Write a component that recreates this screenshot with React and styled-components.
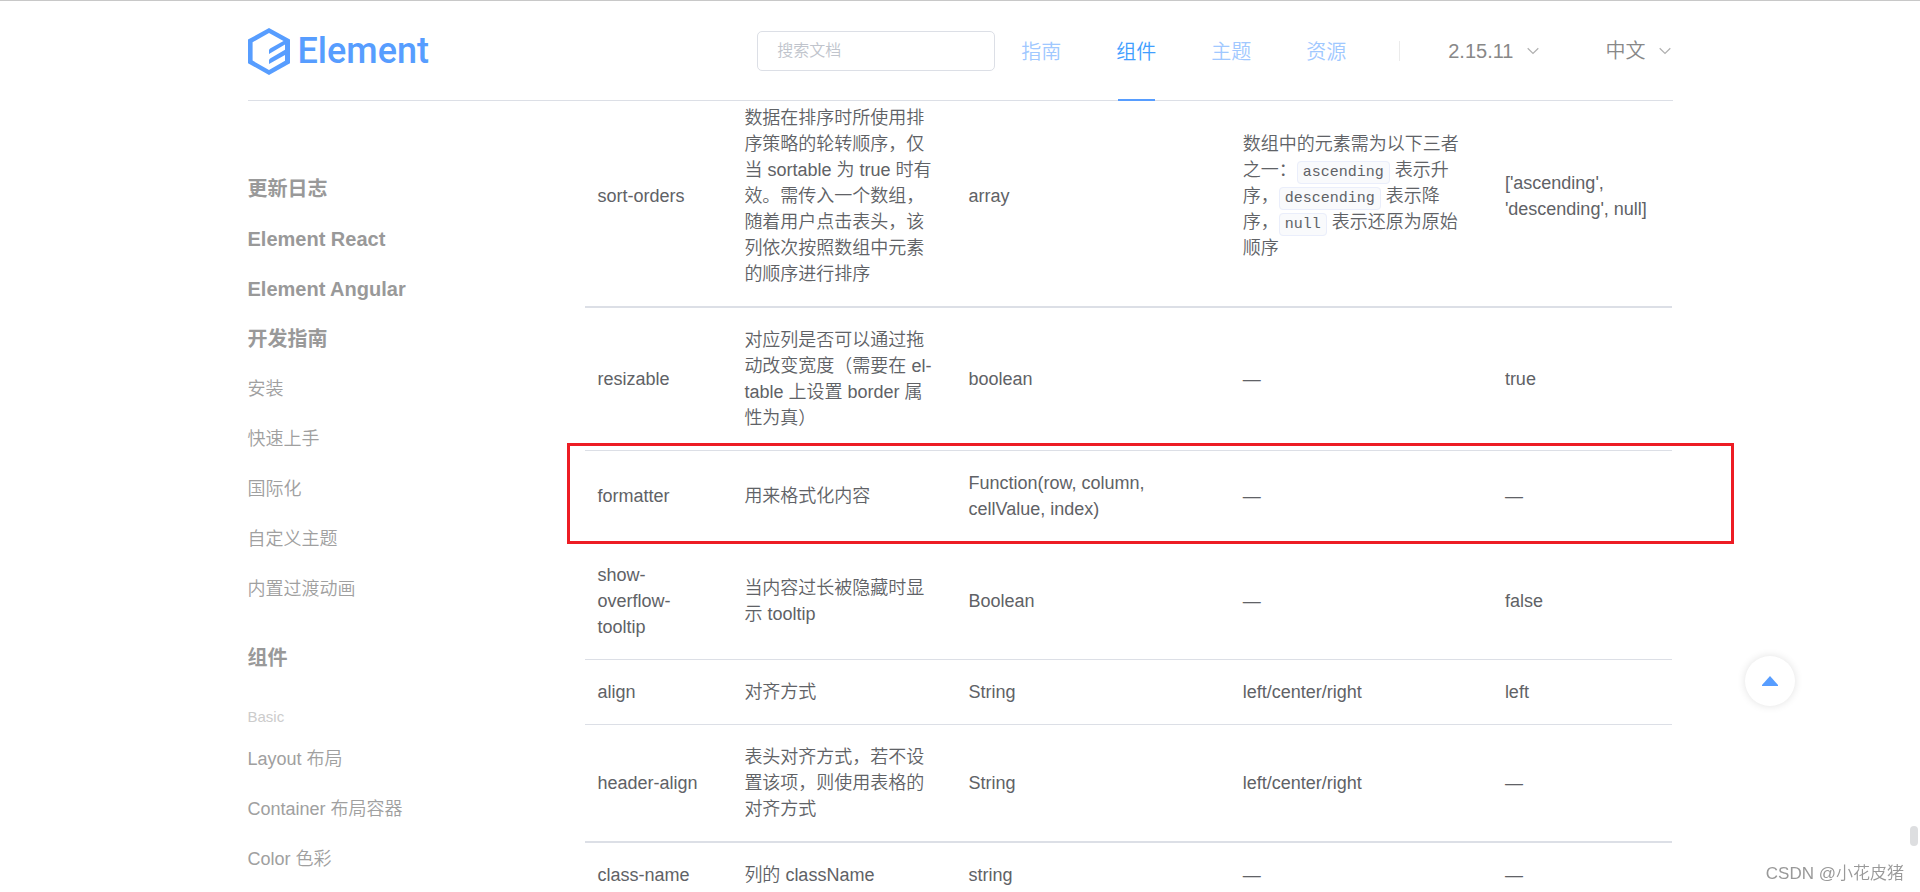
import React from 'react'
import styled, { createGlobalStyle } from 'styled-components';

const Code = styled.code`
    padding: 2px 5px;
    border: 1px solid #eaeefb;
    border-radius: 4px;
    background: #f9fafc;
    font-family: "Liberation Mono", monospace;
    font-size: 15px;
    line-height: 16px;
`

const links = [
    { text: "更新日志", bold: true },
    { text: "Element React", bold: true },
    { text: "Element Angular", bold: true },
    { text: "开发指南", bold: true },
    { text: "安装" },
    { text: "快速上手" },
    { text: "国际化" },
    { text: "自定义主题" },
    { text: "内置过渡动画" },
]

const basicLinks = ["Layout 布局", "Container 布局容器", "Color 色彩"]

const navLinks = ["指南", "组件", "主题", "资源"]

const rows = [
    {
        name: "sort-orders",
        desc: "数据在排序时所使用排序策略的轮转顺序，仅当 sortable 为 true 时有效。需传入一个数组，随着用户点击表头，该列依次按照数组中元素的顺序进行排序",
        type: "array",
        options: (
            <>
                数组中的元素需为以下三者之一：<Code>ascending</Code> 表示升序，<Code>descending</Code> 表示降序，<Code>null</Code> 表示还原为原始顺序
            </>
        ),
        value: "['ascending', 'descending', null]",
        thick: true,
    },
    {
        name: "resizable",
        desc: "对应列是否可以通过拖动改变宽度（需要在 el-table 上设置 border 属性为真）",
        type: "boolean",
        options: "—",
        value: "true",
    },
    {
        name: "formatter",
        desc: "用来格式化内容",
        type: "Function(row, column, cellValue, index)",
        options: "—",
        value: "—",
        thick: true,
        marked: true,
    },
    {
        name: "show-overflow-tooltip",
        desc: "当内容过长被隐藏时显示 tooltip",
        type: "Boolean",
        options: "—",
        value: "false",
    },
    {
        name: "align",
        desc: "对齐方式",
        type: "String",
        options: "left/center/right",
        value: "left",
    },
    {
        name: "header-align",
        desc: "表头对齐方式，若不设置该项，则使用表格的对齐方式",
        type: "String",
        options: "left/center/right",
        value: "—",
        thick: true,
    },
    {
        name: "class-name",
        desc: "列的 className",
        type: "string",
        options: "—",
        value: "—",
    },
]

const Chevron = () => (
    <svg width="12" height="8" viewBox="0 0 12 8" fill="none" stroke="#b0b0b0" strokeWidth="1.2" aria-hidden="true">
        <path d="M0.7 1.2 L6 6.4 L11.3 1.2" />
    </svg>
)

const App = () => (
    <Page>
        <GlobalStyle />
        <Header>
            <HeaderInner>
                <Logo href="#" aria-label="Element">
                    <svg width="42" height="47" viewBox="0 0 42 47" fill="#579dff" aria-hidden="true">
                        <path
                            fillRule="evenodd"
                            d="M21 0 L42 11.6 V35.2 L21 47 L0 35.2 V11.6 Z M21 5 L4.6 14.2 V32.6 L21 42 L37 32.8 V27 L21 36 V32.6 Q21 31 22.5 30.2 L37 21.8 V16.6 L21 26 V22.6 Q21 21 22.5 20.2 L35.5 12.9 Z"
                        />
                    </svg>
                    <LogoText>Element</LogoText>
                </Logo>
                <Search type="text" placeholder="搜索文档" aria-label="搜索文档" />
                <Nav>
                    {navLinks.map((text) => (
                        <NavLink key={text} href="#" $active={text === "组件"}>{text}</NavLink>
                    ))}
                </Nav>
                <Divider />
                <Picker>2.15.11<Chevron /></Picker>
                <Picker>中文<Chevron /></Picker>
            </HeaderInner>
        </Header>
        <Body>
            <Container>
                <Sidebar>
                    {links.map((link) => (
                        <SideLink key={link.text} href="#" $bold={link.bold}>{link.text}</SideLink>
                    ))}
                    <SideGroup>
                        <SideLink href="#" $bold>组件</SideLink>
                        <GroupTitle>Basic</GroupTitle>
                        {basicLinks.map((text) => (
                            <SideLink key={text} href="#">{text}</SideLink>
                        ))}
                    </SideGroup>
                </Sidebar>
                <Content>
                    <Table>
                        <colgroup>
                            <Col $width="13.5%" />
                            <Col $width="20.6%" />
                            <Col $width="25.2%" />
                            <Col $width="24.1%" />
                            <Col $width="16.6%" />
                        </colgroup>
                        <tbody>
                            {rows.map((row) => (
                                <Row key={row.name} $thick={row.thick} $marked={row.marked}>
                                    <td>{row.name}</td>
                                    <td>{row.desc}</td>
                                    <td>{row.type}</td>
                                    <td>{row.options}</td>
                                    <td>{row.value}</td>
                                </Row>
                            ))}
                        </tbody>
                    </Table>
                </Content>
            </Container>
        </Body>
        <BackTop aria-label="回到顶部">
            <svg width="16" height="10" viewBox="0 0 16 10" fill="#579dff" aria-hidden="true">
                <path d="M8 0 L16 9 V10 H0 V9 Z" />
            </svg>
        </BackTop>
        <ScrollThumb />
        <Watermark>CSDN @小花皮猪</Watermark>
    </Page>
)

const GlobalStyle = createGlobalStyle`
    * {
        box-sizing: border-box;
    }
    body {
        margin: 0;
        background: #fff;
        color: #606266;
        font-family: "Liberation Sans", "Noto Sans CJK SC", sans-serif;
        font-size: 18px;
        font-weight: 350;
        line-height: 26px;
    }
    a {
        text-decoration: none;
    }
`

const Page = styled.div`
    display: flex;
    flex-direction: column;
    height: 100vh;
    overflow: hidden;
`

const Header = styled.header`
    flex: none;
    padding: 0 24px;
    border-top: 1px solid #c8c8c8;
`

const HeaderInner = styled.div`
    display: flex;
    align-items: center;
    height: 100px;
    max-width: 1425px;
    margin: 0 auto;
    padding: 1px 2px 0 0;
    border-bottom: 1px solid #dcdfe6;
`

const Logo = styled.a`
    display: flex;
    align-items: center;
    gap: 8px;
    margin-right: auto;
`

const LogoText = styled.span`
    color: #579dff;
    font-family: Roboto, sans-serif;
    font-size: 36px;
    font-weight: 500;
    line-height: 48px;
`

const Search = styled.input`
    width: 238px;
    height: 40px;
    padding: 0 19px;
    border: 1px solid #dcdfe6;
    border-radius: 5px;
    background: #fff;
    color: #606266;
    font: inherit;
    font-size: 16px;
    &::placeholder {
        color: #c0c4cc;
        opacity: 1;
    }
`

const Nav = styled.nav`
    display: flex;
    align-self: stretch;
    gap: 55px;
    margin-left: 26px;
`

const NavLink = styled.a`
    display: flex;
    align-items: center;
    height: 99px;
    color: ${props => props.$active ? "#409eff" : "#a0c8ff"};
    font-size: 20px;
    background: ${props => props.$active ? "linear-gradient(#579dff, #579dff) center bottom / 37px 2px no-repeat" : "none"};
`

const Divider = styled.span`
    width: 1px;
    height: 20px;
    margin: 0 8px 0 53px;
    background: #ebebeb;
`

const Picker = styled.button`
    display: flex;
    align-items: center;
    gap: 13px;
    margin-left: 40px;
    padding: 0;
    border: 0;
    background: none;
    color: #888;
    font: inherit;
    font-size: 20px;
    & + & {
        margin-left: 67px;
    }
`

const Body = styled.div`
    flex: 1;
    min-height: 0;
    padding: 0 24px;
    overflow: hidden;
`

const Container = styled.div`
    display: flex;
    max-width: 1425px;
    margin: 0 auto;
`

const Sidebar = styled.aside`
    display: flex;
    flex: none;
    flex-direction: column;
    width: 337px;
    padding-top: 63px;
`

const SideGroup = styled.div`
    display: flex;
    flex-direction: column;
    margin-top: 19px;
`

const SideLink = styled.a`
    color: ${props => props.$bold ? "#999" : "#a0a0a0"};
    font-size: ${props => props.$bold ? "20px" : "18px"};
    font-weight: ${props => props.$bold ? 700 : 350};
    line-height: 50px;
`

const GroupTitle = styled.div`
    margin-top: 17px;
    color: #ccc;
    font-size: 15px;
    line-height: 34px;
`

/* scrolled partway, so the first row starts under the header */
const Content = styled.main`
    flex: 1;
    min-width: 0;
    margin-top: -15px;
`

const Table = styled.table`
    width: 100%;
    table-layout: fixed;
    border-collapse: separate;
    border-spacing: 0;
`

const Col = styled.col`
    width: ${props => props.$width};
`

const Row = styled.tr`
    position: relative;
    td {
        padding: 19px 18px 19px 13px;
        border-bottom: ${props => props.$thick ? "2px" : "1px"} solid #dcdfe6;
        vertical-align: middle;
    }
    &::after {
        content: "";
        display: ${props => props.$marked ? "block" : "none"};
        position: absolute;
        inset: -8px -61px -1px -18px;
        border: 3px solid #ed1c24;
        pointer-events: none;
    }
`

const BackTop = styled.button`
    display: flex;
    align-items: center;
    justify-content: center;
    position: fixed;
    right: 125px;
    bottom: 186px;
    width: 50px;
    height: 50px;
    padding: 0;
    border: 0;
    border-radius: 50%;
    background: #fff;
    box-shadow: 0 0 8px rgba(0, 0, 0, 0.12);
`

const ScrollThumb = styled.div`
    position: fixed;
    right: 2px;
    bottom: 46px;
    width: 8px;
    height: 20px;
    border-radius: 4px;
    background: #dddee0;
`

const Watermark = styled.div`
    position: fixed;
    right: 16px;
    bottom: 5px;
    color: #999;
    font-size: 17px;
`

export default App
